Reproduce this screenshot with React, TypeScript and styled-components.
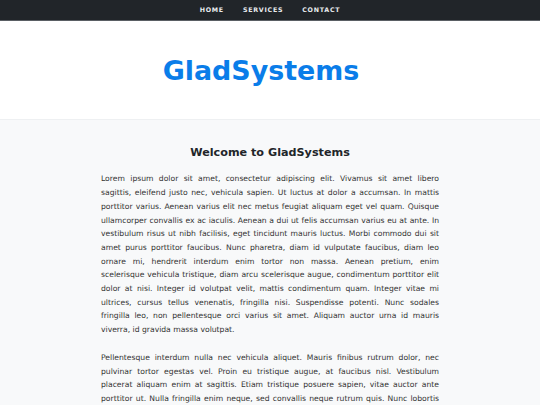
import React from "react";
import styled, { createGlobalStyle } from "styled-components";

const Global = createGlobalStyle`
  html, body { margin: 0; padding: 0; }
  body {
    font-family: "DejaVu Sans", Verdana, sans-serif;
    background: #f8f9fa;
    color: #333;
  }
  * { box-sizing: border-box; }
`;

const Nav = styled.nav`
  background: #212529;
  height: 21px;
  border-bottom: 1px solid #5a5f64;
  display: flex;
  justify-content: center;
  align-items: center;
  gap: 19px;
`;

const NavLink = styled.a`
  color: #e9ecef;
  font-weight: bold;
  font-size: 6.3px;
  letter-spacing: 0.75px;
  text-transform: uppercase;
  text-decoration: none;
  line-height: 1;
`;

const Header = styled.header`
  background: #fff;
  height: 99px;
  display: flex;
  align-items: center;
  justify-content: center;
  border-bottom: 1px solid #eef0f2;
`;

const Title = styled.h1`
  margin: 2px 0 0 -18px;
  font-size: 26.9px;
  font-weight: bold;
  color: #0a7de9;
  line-height: 1;
`;

const Main = styled.main`
  background: #f8f9fa;
  padding: 26px 0 20px;
  display: flex;
  flex-direction: column;
  align-items: center;
`;

const Content = styled.section`
  width: 338px;
`;

const Heading = styled.h2`
  margin: 0 0 13px;
  text-align: center;
  font-size: 11.2px;
  line-height: 13.4px;
  font-weight: bold;
  color: #212529;
`;

const Para = styled.p`
  margin: 0 0 14px;
  font-size: 7.65px;
  line-height: 13.7px;
  text-align: justify;
  color: #333;
`;

const p1 =
  "Lorem ipsum dolor sit amet, consectetur adipiscing elit. Vivamus sit amet libero sagittis, eleifend justo nec, vehicula sapien. Ut luctus at dolor a accumsan. In mattis porttitor varius. Aenean varius elit nec metus feugiat aliquam eget vel quam. Quisque ullamcorper convallis ex ac iaculis. Aenean a dui ut felis accumsan varius eu at ante. In vestibulum risus ut nibh facilisis, eget tincidunt mauris luctus. Morbi commodo dui sit amet purus porttitor faucibus. Nunc pharetra, diam id vulputate faucibus, diam leo ornare mi, hendrerit interdum enim tortor non massa. Aenean pretium, enim scelerisque vehicula tristique, diam arcu scelerisque augue, condimentum porttitor elit dolor at nisi. Integer id volutpat velit, mattis condimentum quam. Integer vitae mi ultrices, cursus tellus venenatis, fringilla nisi. Suspendisse potenti. Nunc sodales fringilla leo, non pellentesque orci varius sit amet. Aliquam auctor urna id mauris viverra, id gravida massa volutpat.";

const p2 =
  "Pellentesque interdum nulla nec vehicula aliquet. Mauris finibus rutrum dolor, nec pulvinar tortor egestas vel. Proin eu tristique augue, at faucibus nisl. Vestibulum placerat aliquam enim at sagittis. Etiam tristique posuere sapien, vitae auctor ante porttitor ut. Nulla fringilla enim neque, sed convallis neque rutrum quis. Nunc lobortis ligula at magna interdum, id fermentum purus tempus. Sed vel arcu ut nisl accumsan tincidunt.";

export default function App() {
  return (
    <>
      <Global />
      <Nav>
        <NavLink href="#">Home</NavLink>
        <NavLink href="#">Services</NavLink>
        <NavLink href="#">Contact</NavLink>
      </Nav>
      <Header>
        <Title>GladSystems</Title>
      </Header>
      <Main>
        <Content>
          <Heading>Welcome to GladSystems</Heading>
          <Para>{p1}</Para>
          <Para>{p2}</Para>
        </Content>
      </Main>
    </>
  );
}
